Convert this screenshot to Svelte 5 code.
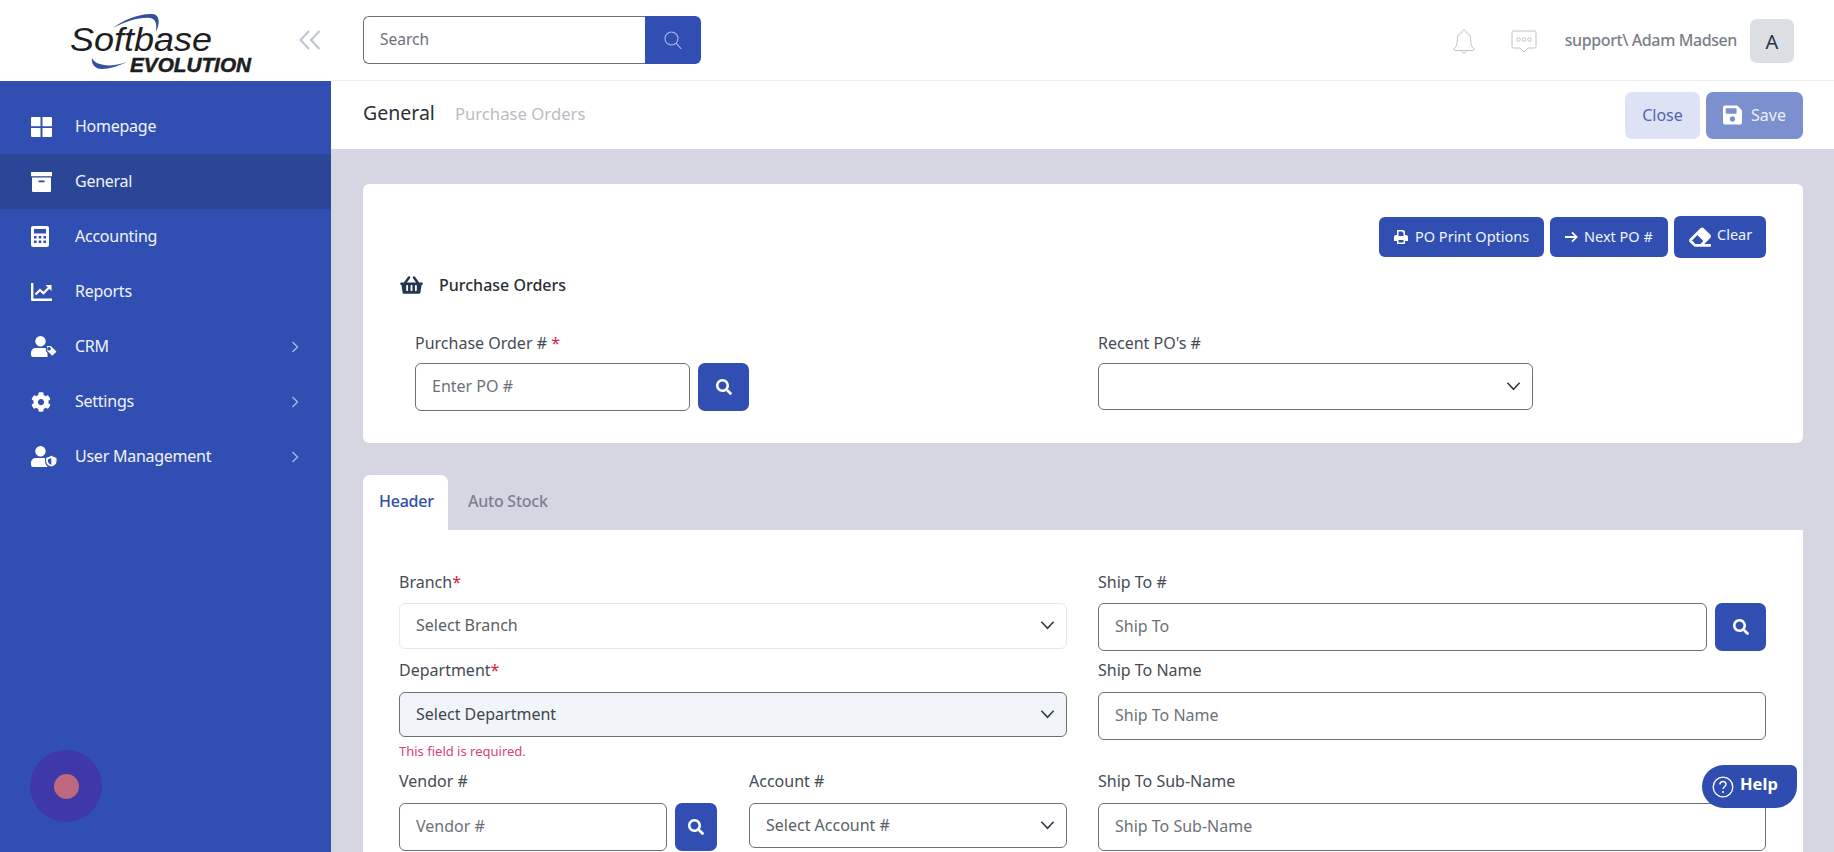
<script lang="ts">
  const nav = [
    { label: 'Homepage', icon: 'grid' },
    { label: 'General', icon: 'archive', active: true },
    { label: 'Accounting', icon: 'calc' },
    { label: 'Reports', icon: 'chart' },
    { label: 'CRM', icon: 'usertag', more: true },
    { label: 'Settings', icon: 'cog', more: true },
    { label: 'User Management', icon: 'usershield', more: true }
  ];

  const searchPath = 'M505 442.7L405.3 343c-4.5-4.5-10.6-7-17-7H372c27.6-35.3 44-79.7 44-128C416 93.1 322.9 0 208 0S0 93.1 0 208s93.1 208 208 208c48.3 0 92.7-16.4 128-44v16.3c0 6.4 2.5 12.5 7 17l99.7 99.7c9.4 9.4 24.6 9.4 33.9 0l28.3-28.3c9.4-9.4 9.4-24.6.1-34zM208 336c-70.7 0-128-57.2-128-128 0-70.7 57.2-128 128-128 70.7 0 128 57.2 128 128 0 70.7-57.2 128-128 128z';
  const cogPath = 'M487.4 315.7l-42.6-24.6c4.3-23.2 4.3-47 0-70.2l42.6-24.6c4.9-2.8 7.1-8.6 5.5-14-11.1-35.6-30-67.8-54.7-94.6-3.8-4.1-10-5.1-14.8-2.3L380.8 110c-17.9-15.4-38.5-27.3-60.8-35.1V25.8c0-5.6-3.9-10.5-9.4-11.7-36.7-8.2-74.3-7.8-109.2 0-5.5 1.2-9.4 6.1-9.4 11.7V75c-22.2 7.9-42.8 19.8-60.8 35.1L88.7 85.5c-4.9-2.8-11-1.9-14.8 2.3-24.7 26.7-43.6 58.9-54.7 94.6-1.7 5.4.6 11.2 5.5 14L67.3 221c-4.3 23.2-4.3 47 0 70.2l-42.6 24.6c-4.9 2.8-7.1 8.6-5.5 14 11.1 35.6 30 67.8 54.7 94.6 3.8 4.1 10 5.1 14.8 2.3l42.6-24.6c17.9 15.4 38.5 27.3 60.8 35.1v49.2c0 5.6 3.9 10.5 9.4 11.7 36.7 8.2 74.3 7.8 109.2 0 5.5-1.2 9.4-6.1 9.4-11.7v-49.2c22.2-7.9 42.8-19.8 60.8-35.1l42.6 24.6c4.9 2.8 11 1.9 14.8-2.3 24.7-26.7 43.6-58.9 54.7-94.6 1.5-5.5-.7-11.3-5.6-14.1zM256 336c-44.1 0-80-35.9-80-80s35.9-80 80-80 80 35.9 80 80-35.9 80-80 80z';
  const basketPath = 'M576 216v16c0 13.255-10.745 24-24 24h-8l-26.113 182.788C514.509 462.435 494.257 480 470.37 480H105.63c-23.887 0-44.139-17.565-47.518-41.212L32 256h-8c-13.255 0-24-10.745-24-24v-16c0-13.255 10.745-24 24-24h67.341l106.78-146.821c10.395-14.292 30.407-17.453 44.701-7.058 14.293 10.395 17.453 30.408 7.058 44.701L170.477 192h235.046L326.12 82.821c-10.395-14.292-7.234-34.306 7.059-44.701 14.291-10.395 34.306-7.235 44.701 7.058L484.659 192H552c13.255 0 24 10.745 24 24zM312 392V280c0-13.255-10.745-24-24-24s-24 10.745-24 24v112c0 13.255 10.745 24 24 24s24-10.745 24-24zm112 0V280c0-13.255-10.745-24-24-24s-24 10.745-24 24v112c0 13.255 10.745 24 24 24s24-10.745 24-24zm-224 0V280c0-13.255-10.745-24-24-24s-24 10.745-24 24v112c0 13.255 10.745 24 24 24s24-10.745 24-24z';
  const savePath = 'M433.941 129.941l-83.882-83.882A48 48 0 0 0 316.118 32H48C21.49 32 0 53.49 0 80v352c0 26.51 21.49 48 48 48h352c26.51 0 48-21.49 48-48V163.882a48 48 0 0 0-14.059-33.941zM224 416c-35.346 0-64-28.654-64-64 0-35.346 28.654-64 64-64s64 28.654 64 64c0 35.346-28.654 64-64 64zm96-304.52V212c0 6.627-5.373 12-12 12H76c-6.627 0-12-5.373-12-12V108c0-6.627 5.373-12 12-12h228.52c3.183 0 6.235 1.264 8.485 3.515l3.48 3.48A11.996 11.996 0 0 1 320 111.48z';
  const eraserPath = 'M497.941 273.941c18.745-18.745 18.745-49.137 0-67.882l-160-160c-18.745-18.745-49.137-18.745-67.882 0l-256 256c-18.745 18.745-18.745 49.137 0 67.882l96 96A48.004 48.004 0 0 0 144 480h356c6.627 0 12-5.373 12-12v-40c0-6.627-5.373-12-12-12H355.883l142.058-142.059zm-302.627-62.627l137.373 137.373L265.373 416H150.628l-80-80 124.686-124.686z';
</script>

{#snippet searchBtn(cls)}
  <button class="search-btn {cls}" aria-label="Search">
    <svg viewBox="0 0 512 512" width="16" height="16"><path fill="#fff" d={searchPath} /></svg>
  </button>
{/snippet}

{#snippet chevron()}
  <svg class="chev" viewBox="0 0 16 10" width="15" height="10"><path d="M1.5 1.5 8 8.5l6.5-7" fill="none" stroke="#333a46" stroke-width="1.7" /></svg>
{/snippet}

{#snippet navIcon(name)}
  {#if name === 'grid'}
    <svg viewBox="0 0 21 20" width="21" height="20"><path fill="#fff" d="M1 0h8.500v9.200H0V1a1 1 0 0 1 1-1zM11.500 0H20a1 1 0 0 1 1 1v8.200h-9.500zM0 11h9.500v9H1a1 1 0 0 1-1-1zM11.500 11H21v8a1 1 0 0 1-1 1h-8.500z" /></svg>
  {:else if name === 'archive'}
    <svg viewBox="0 0 21 20" width="21" height="20"><path fill="#fff" fill-rule="evenodd" d="M0 0h21v4.200H0zM1 5.600h19V19a1 1 0 0 1-1 1H2a1 1 0 0 1-1-1zm6.500 3v1.700h6V8.600z" /></svg>
  {:else if name === 'calc'}
    <svg viewBox="0 0 18 21" width="18" height="21"><path fill="#fff" fill-rule="evenodd" d="M2 0h14a2 2 0 0 1 2 2v17a2 2 0 0 1-2 2H2a2 2 0 0 1-2-2V2a2 2 0 0 1 2-2zm1 3v4.500h12V3zm0 7v2.400h2.600V10zm4.700 0v2.400h2.600V10zm4.700 0v2.400H15V10zM3 14.600V17h2.600v-2.400zm4.700 0V17h2.600v-2.400zm4.700 0V17H15v-2.400z" /></svg>
  {:else if name === 'chart'}
    <svg viewBox="0 0 21 18" width="21" height="18"><path fill="#fff" d="M0 0h2.400v15.400H21V18H1a1 1 0 0 1-1-1z" /><path fill="none" stroke="#fff" stroke-width="2.200" d="M4.500 11.500 9 7l3.400 3.200L18.500 4" /><path fill="#fff" d="M14.500 2H20.500V8z" /></svg>
  {:else if name === 'usertag'}
    <svg viewBox="0 0 26 21" width="26" height="21"><circle cx="9.500" cy="5.200" r="5.200" fill="#fff" /><path fill="#fff" d="M4.500 12h9.200c1.100 0 2 .3 2.800.9v8.100H2a2 2 0 0 1-2-2v-2.200C0 14.200 2 12 4.500 12z" /><path fill="#fff" fill-rule="evenodd" stroke="#314fb2" stroke-width="1.200" d="M15.500 9.500h4.700l5.400 5.400a1 1 0 0 1 0 1.400l-3.700 3.700a1 1 0 0 1-1.400 0l-5-5zm2.600 2a1.200 1.200 0 1 0 0 2.400 1.200 1.200 0 0 0 0-2.400z" /></svg>
  {:else if name === 'cog'}
    <svg viewBox="0 0 512 512" width="20" height="20"><path fill="#fff" d={cogPath} /></svg>
  {:else if name === 'usershield'}
    <svg viewBox="0 0 26 21" width="26" height="21"><circle cx="9.500" cy="5.200" r="5.200" fill="#fff" /><path fill="#fff" d="M4.500 12h8.700l1 .2v3c0 2 .8 4.200 2.500 5.800H2a2 2 0 0 1-2-2v-2.200C0 14.200 2 12 4.500 12z" /><path fill="#fff" stroke="#314fb2" stroke-width="1" d="M20.300 9.300 26 11.700v3.500c0 2.800-2 4.900-5.700 5.800-3.700-.9-5.700-3-5.700-5.800v-3.500z" /><path fill="#314fb2" d="M20.300 12v6.700c-2-.7-3.300-1.900-3.300-3.500v-1.700z" /></svg>
  {/if}
{/snippet}

<div class="page">
  <aside class="sidebar">
    <div class="brand">
      <svg class="logo" viewBox="0 0 185 62" width="185" height="62">
        <path fill="#33509f" d="M45 16C55 8 72 1 85 2c7 1 7 10 3 18 1-8 0-13-6-14C72 5 58 9 45 16z" />
        <path fill="#33509f" d="M24 46c-1 6 3 11 10 11 8 0 16-3 25-7-9 3-17 4-23 3-6-1-10-3-12-7z" />
        <text x="2" y="39" class="logo-a" textLength="142" lengthAdjust="spacingAndGlyphs">Softbase</text>
        <text x="62" y="60" class="logo-b" textLength="121" lengthAdjust="spacingAndGlyphs">EVOLUTION</text>
      </svg>
      <svg class="collapse" viewBox="0 0 22 20" width="22" height="20"><path d="M10 1 1.500 10 10 19M20.500 1 12 10l8.500 9" fill="none" stroke="#bcc3d6" stroke-width="2" /></svg>
    </div>
    <nav class="menu">
      {#each nav as item}
        <div class="item" class:active={item.active}>
          <span class="ico">{@render navIcon(item.icon)}</span>
          <span class="name">{item.label}</span>
          {#if item.more}
            <svg class="more" viewBox="0 0 8 12" width="8" height="12"><path d="M1.500 1 6.500 6l-5 5" fill="none" stroke="#a9b7e4" stroke-width="1.400" /></svg>
          {/if}
        </div>
      {/each}
    </nav>
    <div class="fab"><span></span></div>
  </aside>

  <main class="main">
    <header class="topbar">
      <div class="topsearch">
        <input placeholder="Search" />
        <button aria-label="Search">
          <svg viewBox="0 0 18 19" width="18" height="19"><circle cx="7.500" cy="7.500" r="6.500" fill="none" stroke="#aebde8" stroke-width="1.100" /><path d="m12.300 12.300 5 5.700" stroke="#aebde8" stroke-width="1.100" /></svg>
        </button>
      </div>
      <div class="topright">
        <svg class="bell" viewBox="0 0 22 25" width="22" height="25"><path fill="none" stroke="#bfc2c7" stroke-width="1" d="M11 1a2 2 0 0 1 2 2.500c3.500 1 4.700 3.500 4.700 7 0 5 1 7.500 3.500 9.500.2.800 0 1.200-.7 1.500H1.500c-.7-.3-.9-.7-.7-1.500 2.500-2 3.500-4.500 3.500-9.500 0-3.500 1.200-6 4.700-7A2 2 0 0 1 11 1zM8 21.500c.3 1.600 1.500 2.500 3 2.500s2.700-.9 3-2.500" /></svg>
        <svg class="chat" viewBox="0 0 26 23" width="26" height="23"><path fill="none" stroke="#bfc2c7" stroke-width="1" d="M2.500 1h21A1.500 1.500 0 0 1 25 2.500v14a1.500 1.500 0 0 1-1.500 1.500H17l-4 4-4-4H2.500A1.500 1.500 0 0 1 1 16.500v-14A1.500 1.500 0 0 1 2.500 1z" /><circle cx="7.500" cy="9.500" r="1.800" fill="none" stroke="#bfc2c7" /><circle cx="13" cy="9.500" r="1.800" fill="none" stroke="#bfc2c7" /><circle cx="18.500" cy="9.500" r="1.800" fill="none" stroke="#bfc2c7" /></svg>
        <span class="user">support\ Adam Madsen</span>
        <span class="avatar">A</span>
      </div>
    </header>

    <div class="subbar">
      <div class="crumbs">
        <span class="crumb-main">General</span>
        <span class="crumb-sub">Purchase Orders</span>
      </div>
      <div class="actions">
        <button class="close">Close</button>
        <button class="save">
          <svg viewBox="0 0 448 512" width="19" height="22"><path fill="#fff" d={savePath} /></svg>
          Save
        </button>
      </div>
    </div>

    <div class="content">
      <section class="card top-card">
        <div class="toolbar">
          <button class="tool print">
            <svg viewBox="0 0 14 14" width="14" height="14"><path fill="#fff" fill-rule="evenodd" d="M3 0h6.500L11 1.500V5h1a2 2 0 0 1 2 2v4h-3v3H3v-3H0V7a2 2 0 0 1 2-2h1zm1.500 1.500V6h5V2.500h-1v-1zm0 8.500v2.500h5V10z" /></svg>
            PO Print Options
          </button>
          <button class="tool next">
            <svg viewBox="0 0 14 12" width="13" height="12"><path d="M0 6h12.500M7.500 1l5 5-5 5" fill="none" stroke="#fff" stroke-width="1.900" /></svg>
            Next PO #
          </button>
          <button class="tool clear">
            <svg viewBox="0 0 512 512" width="22" height="22"><path fill="#fff" d={eraserPath} /></svg>
            <span>Clear</span>
          </button>
        </div>
        <h2 class="title">
          <svg viewBox="0 0 576 512" width="23" height="20"><path fill="#253550" d={basketPath} /></svg>
          Purchase Orders
        </h2>
        <div class="po-row">
          <div>
            <div class="label low">Purchase Order # <b>*</b></div>
            <div class="combo">
              <input class="input po" placeholder="Enter PO #" />
              {@render searchBtn('')}
            </div>
          </div>
          <div>
            <div class="label low">Recent PO's #</div>
            <div class="select recent">{@render chevron()}</div>
          </div>
        </div>
      </section>

      <div class="tabs">
        <div class="tab on">Header</div>
        <div class="tab">Auto Stock</div>
      </div>

      <section class="card form">
        <div class="col">
          <div class="field">
            <div class="label low">Branch<b>*</b></div>
            <div class="select quiet"><span>Select Branch</span>{@render chevron()}</div>
          </div>
          <div class="field tight">
            <div class="label">Department<b>*</b></div>
            <div class="select invalid"><span>Select Department</span>{@render chevron()}</div>
            <div class="error">This field is required.</div>
          </div>
          <div class="split">
            <div class="field">
              <div class="label">Vendor #</div>
              <div class="combo">
                <input class="input" placeholder="Vendor #" />
                {@render searchBtn('narrow')}
              </div>
            </div>
            <div class="field">
              <div class="label">Account #</div>
              <div class="select"><span>Select Account #</span>{@render chevron()}</div>
            </div>
          </div>
        </div>
        <div class="col">
          <div class="field ship">
            <div class="label low">Ship To #</div>
            <div class="combo">
              <input class="input" placeholder="Ship To" />
              {@render searchBtn('')}
            </div>
          </div>
          <div class="field ship2">
            <div class="label">Ship To Name</div>
            <input class="input" placeholder="Ship To Name" />
          </div>
          <div class="field">
            <div class="label">Ship To Sub-Name</div>
            <input class="input" placeholder="Ship To Sub-Name" />
          </div>
        </div>
      </section>
    </div>
  </main>

  <div class="help">
    <svg viewBox="0 0 22 22" width="22" height="22"><circle cx="11" cy="11" r="9.800" fill="none" stroke="#fff" stroke-width="1.300" /><path d="M8 8.500c0-2 1.400-3 3-3s3 1 3 2.800c0 2.400-3 2.500-3 4.700" fill="none" stroke="#fff" stroke-width="1.400" /><circle cx="11" cy="16" r="1" fill="#fff" /></svg>
    <span>Help</span>
  </div>
</div>

<style>
  :global(body) {
    margin: 0;
    background: #fff;
  }
  * {
    box-sizing: border-box;
  }
  .page {
    display: flex;
    width: 1834px;
    height: 852px;
    overflow: hidden;
    position: relative;
    font-family: "Noto Sans", sans-serif;
    font-size: 16px;
    color: #3f4650;
  }
  button {
    font: inherit;
    border: 0;
    cursor: pointer;
  }
  input {
    font: inherit;
    outline: none;
  }
  input::placeholder {
    color: #6c7178;
    opacity: 1;
  }

  /* sidebar */
  .sidebar {
    flex: 0 0 331px;
    background: #314fb2;
    position: relative;
  }
  .brand {
    height: 81px;
    background: #fff;
    display: flex;
    align-items: flex-start;
    padding: 12px 10px 0 68px;
    justify-content: space-between;
  }
  .logo {
    overflow: visible;
  }
  .logo-a {
    font-family: "Liberation Sans", sans-serif;
    font-style: italic;
    font-size: 33px;
    fill: #1d1d22;
  }
  .logo-b {
    font-family: "Liberation Sans", sans-serif;
    font-style: italic;
    font-weight: 700;
    font-size: 20px;
    fill: #1d1d22;
    stroke: #1d1d22;
    stroke-width: 0.5px;
  }
  .collapse {
    margin-top: 18px;
  }
  .menu {
    padding-top: 18px;
  }
  .item {
    height: 55px;
    display: flex;
    align-items: center;
    padding-right: 32px;
    color: #f1f3fb;
    font-size: 16px;
    letter-spacing: -0.25px;
  }
  .item.active {
    background: #2b4597;
  }
  .ico {
    width: 75px;
    padding-left: 31px;
    display: flex;
    align-items: center;
  }
  .name {
    flex: 1;
    padding-bottom: 2px;
  }
  .fab {
    position: absolute;
    left: 30px;
    top: 750px;
    width: 72px;
    height: 72px;
    border-radius: 50%;
    background: #3f38a8;
    display: flex;
    align-items: center;
    justify-content: center;
  }
  .fab span {
    width: 25px;
    height: 25px;
    border-radius: 50%;
    background: #bd6a80;
  }

  /* top */
  .main {
    flex: 1;
    display: flex;
    flex-direction: column;
    min-width: 0;
  }
  .topbar {
    height: 81px;
    flex: none;
    border-bottom: 1px solid #eceef1;
    display: flex;
    align-items: flex-start;
    justify-content: space-between;
    padding: 16px 40px 0 32px;
  }
  .topsearch {
    display: flex;
    width: 338px;
    height: 48px;
  }
  .topsearch input {
    flex: 1;
    min-width: 0;
    border: 1px solid #6b7076;
    border-right: 0;
    border-radius: 6px 0 0 6px;
    padding: 0 16px 2px;
    font-size: 15.5px;
  }
  .topsearch button {
    width: 56px;
    background: #314fb2;
    border-radius: 0 6px 6px 0;
    display: flex;
    align-items: center;
    justify-content: center;
  }
  .topright {
    display: flex;
    align-items: center;
    height: 44px;
    margin-top: 3px;
  }
  .chat {
    margin-left: 36px;
  }
  .user {
    margin-left: 28px;
    padding-bottom: 2px;
    color: #7a7e8a;
    font-size: 16px;
    font-weight: 500;
    letter-spacing: -0.4px;
  }
  .avatar {
    margin-left: 13px;
    width: 44px;
    height: 44px;
    border-radius: 7px;
    background: #dbdfe3;
    color: #2a3442;
    font-size: 20px;
    display: flex;
    align-items: center;
    justify-content: center;
  }
  .subbar {
    height: 68px;
    flex: none;
    padding: 11px 31px 0 32px;
    display: flex;
    justify-content: space-between;
    align-items: flex-start;
  }
  .crumbs {
    display: flex;
    align-items: baseline;
    gap: 20px;
    margin-top: 7px;
  }
  .crumb-main {
    font-size: 19.5px;
    color: #2a2f36;
  }
  .crumb-sub {
    font-size: 16.7px;
    color: #b9bcc3;
  }
  .actions {
    display: flex;
    gap: 6px;
  }
  .actions button {
    height: 47px;
    border-radius: 7px;
    font-size: 16px;
    padding-bottom: 3px;
    display: flex;
    align-items: center;
  }
  .close {
    width: 75px;
    justify-content: center;
    background: #dde2f4;
    color: #5266ae;
  }
  .save {
    width: 97px;
    justify-content: center;
    gap: 9px;
    background: #7c8fce;
    color: #eef0f9;
  }

  /* content */
  .content {
    flex: 1;
    background: #d5d6e2;
    padding: 35px 31px 0 32px;
  }
  .card {
    background: #fff;
    border-radius: 6px;
  }
  .top-card {
    height: 259px;
    padding: 33px 37px 0;
  }
  .toolbar {
    display: flex;
    justify-content: flex-end;
    align-items: center;
    gap: 6px;
    height: 40px;
  }
  .tool {
    height: 40px;
    border-radius: 6px;
    background: #314fb2;
    color: #f2f4fb;
    font-size: 14.5px;
    display: flex;
    align-items: center;
    padding: 0 0 2px 15px;
    gap: 7px;
  }
  .tool svg {
    margin-top: 2px;
  }
  .tool.print {
    width: 165px;
  }
  .tool.next {
    width: 118px;
    gap: 6px;
  }
  .tool.clear {
    width: 92px;
    height: 42px;
    padding-left: 15px;
    gap: 6px;
  }
  .tool.clear span {
    padding-bottom: 4px;
  }
  .title {
    margin: 16px 0 33px;
    height: 24px;
    display: flex;
    align-items: center;
    gap: 16px;
    font-size: 16px;
    font-weight: 500;
    color: #2a2f36;
  }
  .po-row {
    display: grid;
    grid-template-columns: 652px 435px;
    gap: 31px;
    margin-left: 15px;
  }
  .label {
    height: 24px;
    line-height: 24px;
    margin-bottom: 10px;
    font-size: 16px;
    color: #454b55;
    white-space: nowrap;
  }
  .label.low {
    line-height: 26px;
  }
  .po-row .label {
    margin-bottom: 9px;
  }
  .label b {
    color: #d8193a;
    font-weight: 400;
  }
  .combo {
    display: flex;
    gap: 8px;
  }
  .input {
    display: block;
    width: 100%;
    min-width: 0;
    height: 48px;
    border: 1px solid #6b7076;
    border-radius: 6px;
    padding: 0 16px 2px;
    font-size: 16px;
    color: #454b55;
    background: #fff;
  }
  .input.po {
    width: 275px;
    flex: none;
  }
  .search-btn {
    flex: none;
    width: 51px;
    height: 48px;
    background: #314fb2;
    border-radius: 7px;
    display: flex;
    align-items: center;
    justify-content: center;
  }
  .search-btn.narrow {
    width: 42px;
  }
  .select {
    height: 45px;
    border: 1px solid #6b7076;
    border-radius: 6px;
    padding: 0 11px 2px 16px;
    display: flex;
    align-items: center;
    justify-content: space-between;
    font-size: 16px;
    color: #5a5f67;
    background: #fff;
  }
  .chev {
    margin-left: auto;
  }
  .select.recent {
    height: 47px;
  }
  .select.quiet {
    height: 46px;
    border-color: #e5e7eb;
  }
  .select.invalid {
    background: #f1f5f9;
    color: #3f4650;
  }
  .error {
    margin-top: 6px;
    height: 16px;
    line-height: 16px;
    font-size: 13px;
    color: #dc3d7c;
  }

  .tabs {
    display: flex;
    margin-top: 32px;
    height: 55px;
  }
  .tab {
    padding: 0 20px 4px;
    display: flex;
    align-items: center;
    font-size: 16px;
    font-weight: 500;
    letter-spacing: -0.25px;
    color: #7a7f95;
    border-radius: 7px 7px 0 0;
  }
  .tab.on {
    width: 85px;
    padding-left: 16px;
    background: #fff;
    color: #2f4ea6;
  }
  .form {
    border-radius: 0;
    padding: 39px 37px 0 36px;
    display: grid;
    grid-template-columns: 668px 668px;
    gap: 31px;
    height: 400px;
  }
  .field {
    margin-bottom: 9px;
    min-width: 0;
  }
  .field.tight {
    margin-bottom: 10px;
  }
  .field.ship {
    margin-bottom: 7px;
  }
  .field.ship2 {
    margin-bottom: 29px;
  }
  .split {
    display: grid;
    grid-template-columns: 318px 318px;
    gap: 32px;
  }

  .help {
    position: absolute;
    left: 1702px;
    top: 765px;
    width: 95px;
    height: 43px;
    background: #2f4db0;
    color: #fff;
    border-radius: 22px 6px 22px 22px;
    display: flex;
    align-items: center;
    gap: 6px;
    padding-left: 10px;
    font-weight: 700;
    font-size: 16.5px;
  }
  .help span {
    padding-bottom: 6px;
  }
</style>
